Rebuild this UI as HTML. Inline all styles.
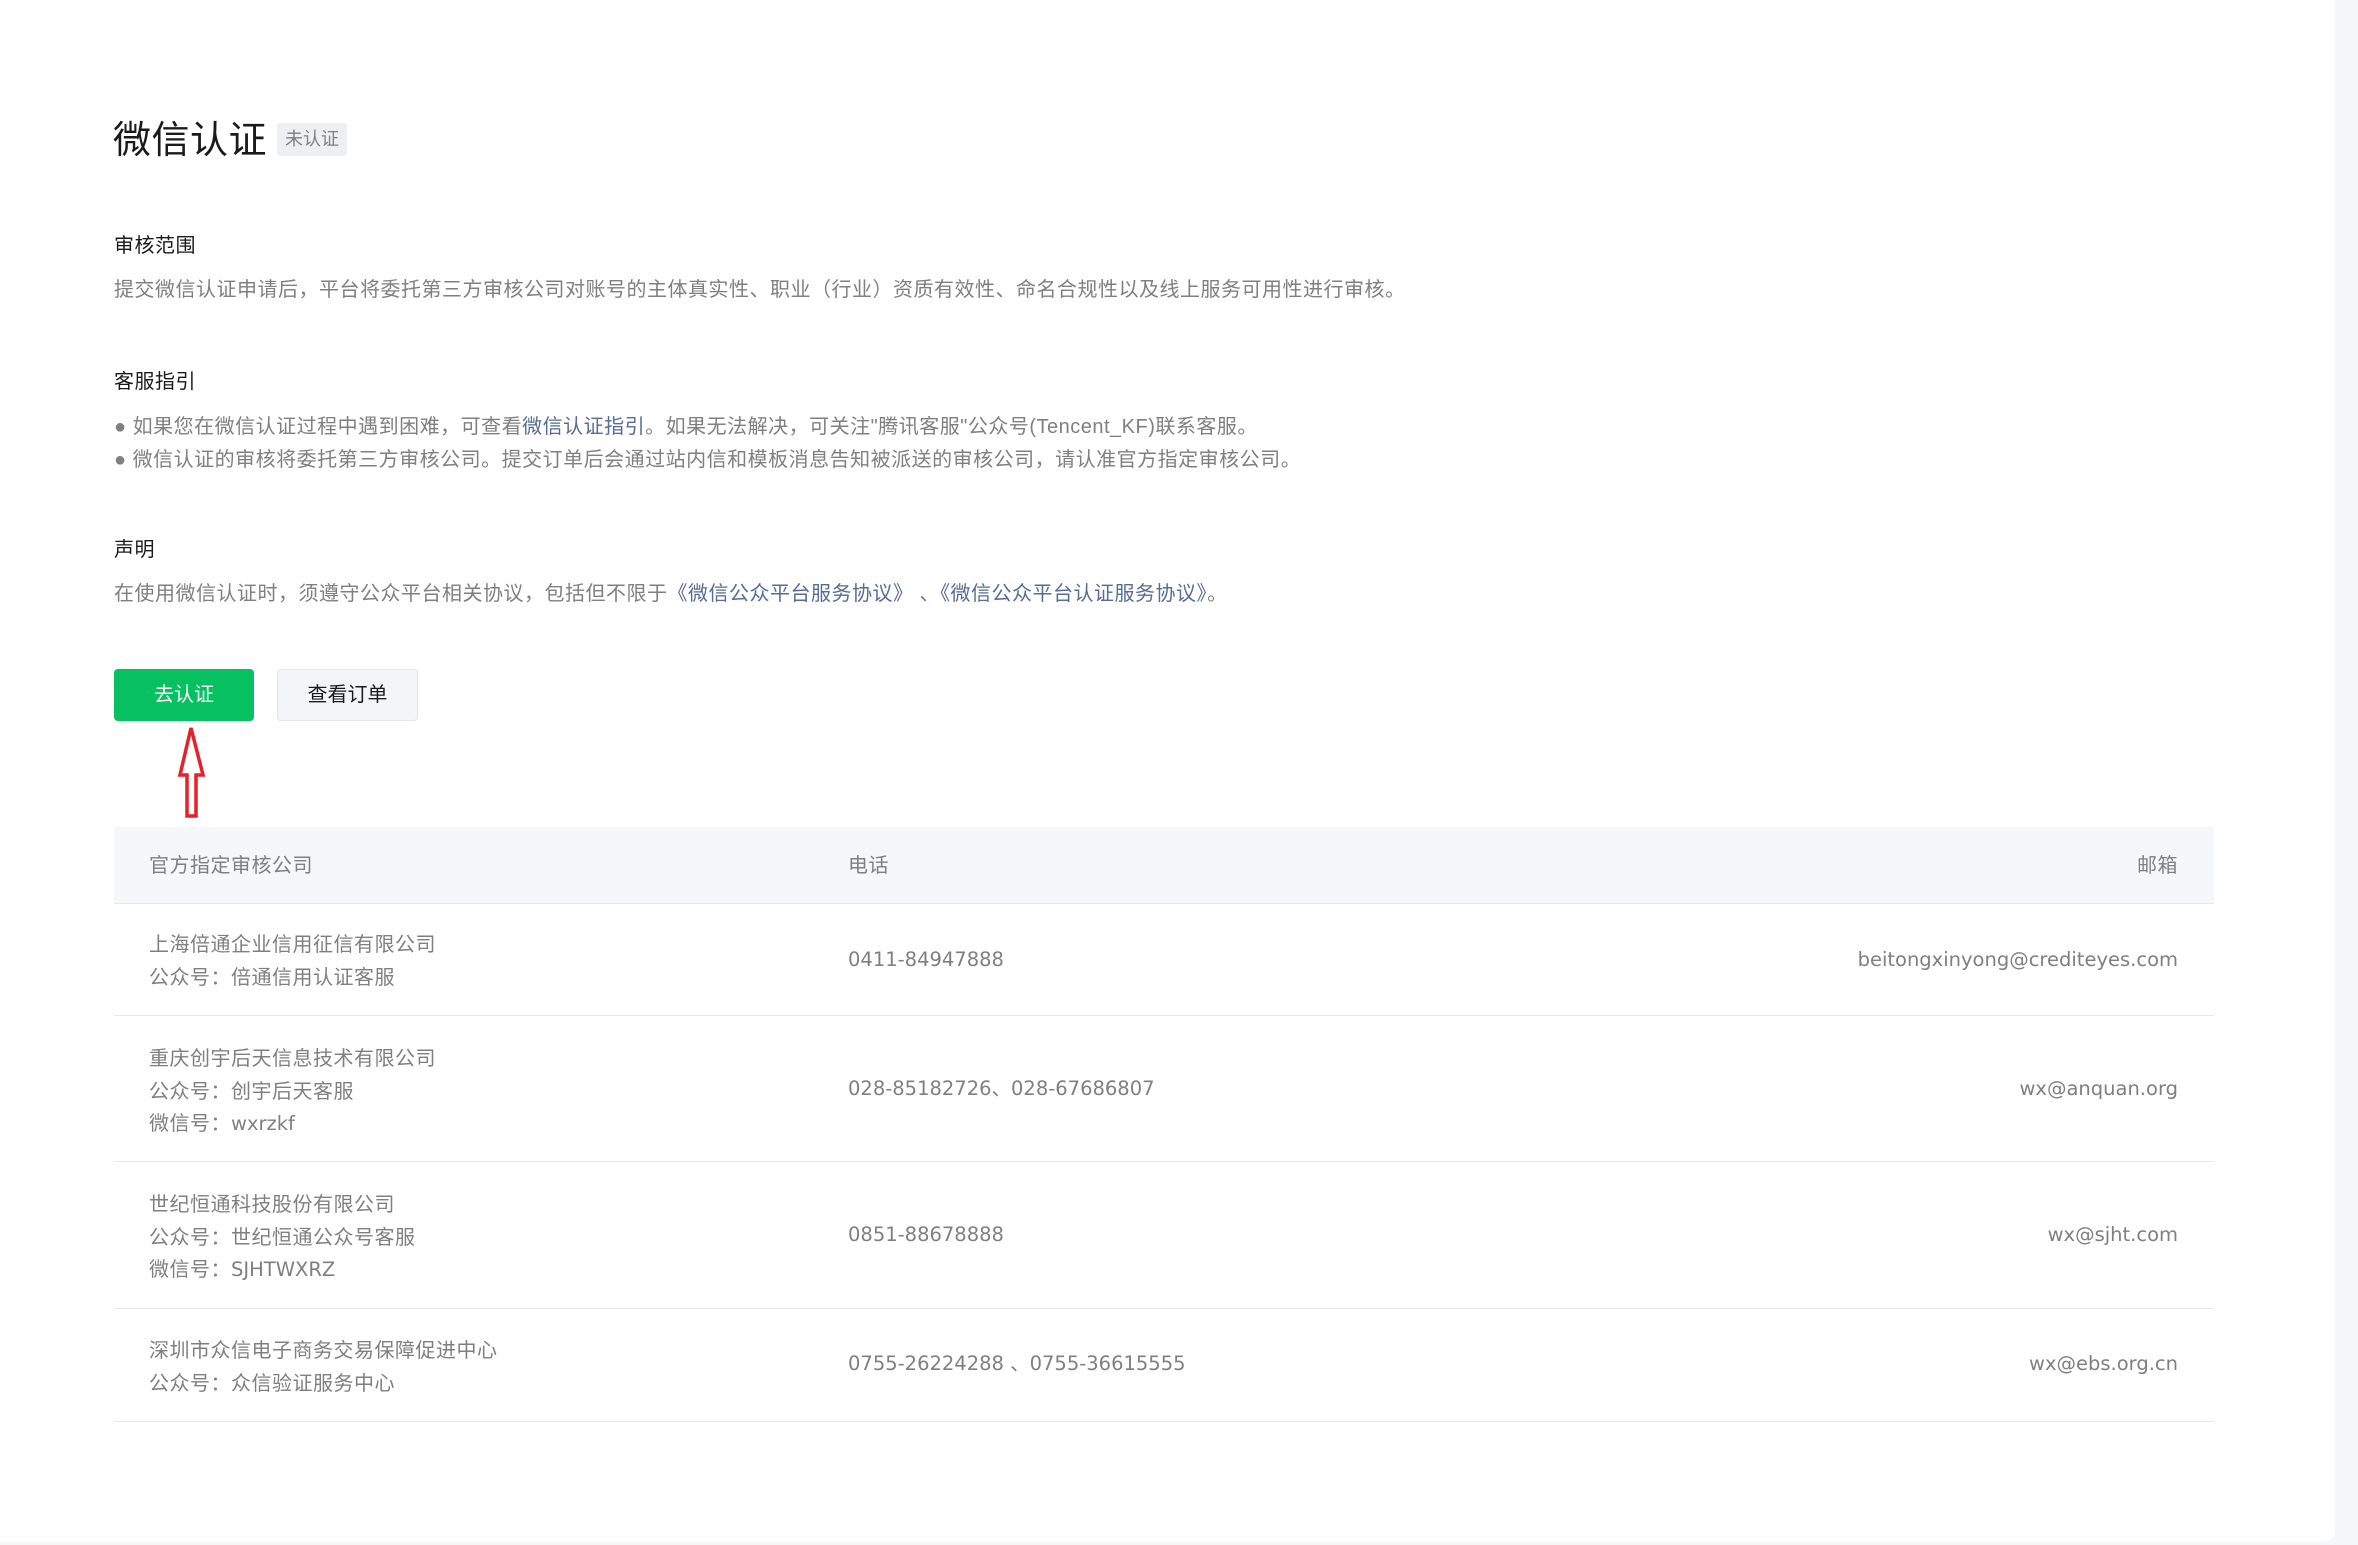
<!DOCTYPE html>
<html><head><meta charset="utf-8"><style>
*{margin:0;padding:0;box-sizing:border-box}
body{width:2358px;height:1545px;background:#f6f7f9;font-family:"Liberation Sans","Noto Sans CJK SC",sans-serif;position:relative;overflow:hidden}
.card{position:absolute;left:0;top:0;width:2335px;height:1542px;background:#fff;border-radius:0 0 12px 0}
.a{position:absolute;white-space:nowrap}
.h{font-size:20px;color:#1a1a1a;letter-spacing:0.5px}
.t{font-size:20px;color:#7f7f7f;letter-spacing:0.5px}
.d{font-family:"DejaVu Sans","Noto Sans CJK SC",sans-serif;font-size:19.5px;letter-spacing:0}
.l{color:#576b95}
.line{position:absolute;left:114px;width:2100px;height:1px;background:#e7e7e7}
</style></head><body>
<div class="card"></div>
<div class="a" style="left:113px;top:117px;font-size:38px;color:#1a1a1a;line-height:48px;letter-spacing:0.5px">微信认证</div>
<div class="a" style="left:277px;top:123px;width:70px;height:33px;background:#eeeff1;border-radius:3px;font-size:18px;color:#7f7f7f;line-height:33px;text-align:center">未认证</div>
<div class="a h" style="left:114px;top:232px;line-height:28px">审核范围</div>
<div class="a t" style="left:114px;top:276px;line-height:28px">提交微信认证申请后，平台将委托第三方审核公司对账号的主体真实性、职业（行业）资质有效性、命名合规性以及线上服务可用性进行审核。</div>
<div class="a h" style="left:114px;top:368px;line-height:28px">客服指引</div>
<div class="a t" style="left:114px;top:413px;line-height:28px">● 如果您在微信认证过程中遇到困难，可查看<span class="l">微信认证指引</span>。如果无法解决，可关注"腾讯客服"公众号(Tencent_KF)联系客服。</div>
<div class="a t" style="left:114px;top:446px;line-height:28px">● 微信认证的审核将委托第三方审核公司。提交订单后会通过站内信和模板消息告知被派送的审核公司，请认准官方指定审核公司。</div>
<div class="a h" style="left:114px;top:536px;line-height:28px">声明</div>
<div class="a t" style="left:114px;top:580px;line-height:28px">在使用微信认证时，须遵守公众平台相关协议，包括但不限于<span class="l">《微信公众平台服务协议》</span> 、<span class="l">《微信公众平台认证服务协议》</span>。</div>
<div class="a" style="left:114px;top:669px;width:140px;height:52px;background:#07c160;border-radius:4px;color:#fff;font-size:20px;line-height:52px;text-align:center">去认证</div>
<div class="a" style="left:277px;top:669px;width:141px;height:52px;background:#f4f5f7;border:1px solid #e4e5e7;border-radius:4px;color:#1a1a1a;font-size:20px;line-height:50px;text-align:center">查看订单</div>
<svg class="a" style="left:170px;top:720px" width="44" height="104"><path d="M21 8 L10 55 L17 55 L17 96 L26 96 L26 55 L33 55 Z" fill="none" stroke="#e5212b" stroke-width="3.5" stroke-linejoin="miter"/></svg>
<div class="a" style="left:114px;top:827px;width:2100px;height:76px;background:#f6f7f9"></div>
<div class="line" style="top:903px"></div>
<div class="a t" style="left:149px;top:852px;line-height:28px">官方指定审核公司</div>
<div class="a t" style="left:848px;top:852px;line-height:28px">电话</div>
<div class="a t" style="right:180px;top:852px;line-height:28px">邮箱</div>

<div class="a t" style="left:149px;top:929px;line-height:32.5px">上海倍通企业信用征信有限公司<br>公众号：倍通信用认证客服</div>
<div class="a t d" style="left:848px;top:946px;line-height:28px">0411-84947888</div>
<div class="a t d" style="right:180px;top:946px;line-height:28px">beitongxinyong@crediteyes.com</div>
<div class="line" style="top:1015px"></div>

<div class="a t" style="left:149px;top:1043px;line-height:32.5px">重庆创宇后天信息技术有限公司<br>公众号：创宇后天客服<br>微信号：<span class="d">wxrzkf</span></div>
<div class="a t d" style="left:848px;top:1075px;line-height:28px">028-85182726、028-67686807</div>
<div class="a t d" style="right:180px;top:1075px;line-height:28px">wx@anquan.org</div>
<div class="line" style="top:1161px"></div>

<div class="a t" style="left:149px;top:1189px;line-height:32.5px">世纪恒通科技股份有限公司<br>公众号：世纪恒通公众号客服<br>微信号：<span class="d">SJHTWXRZ</span></div>
<div class="a t d" style="left:848px;top:1221px;line-height:28px">0851-88678888</div>
<div class="a t d" style="right:180px;top:1221px;line-height:28px">wx@sjht.com</div>
<div class="line" style="top:1308px"></div>

<div class="a t" style="left:149px;top:1335px;line-height:32.5px">深圳市众信电子商务交易保障促进中心<br>公众号：众信验证服务中心</div>
<div class="a t d" style="left:848px;top:1350px;line-height:28px">0755-26224288 、0755-36615555</div>
<div class="a t d" style="right:180px;top:1350px;line-height:28px">wx@ebs.org.cn</div>
<div class="line" style="top:1421px"></div>
</body></html>
